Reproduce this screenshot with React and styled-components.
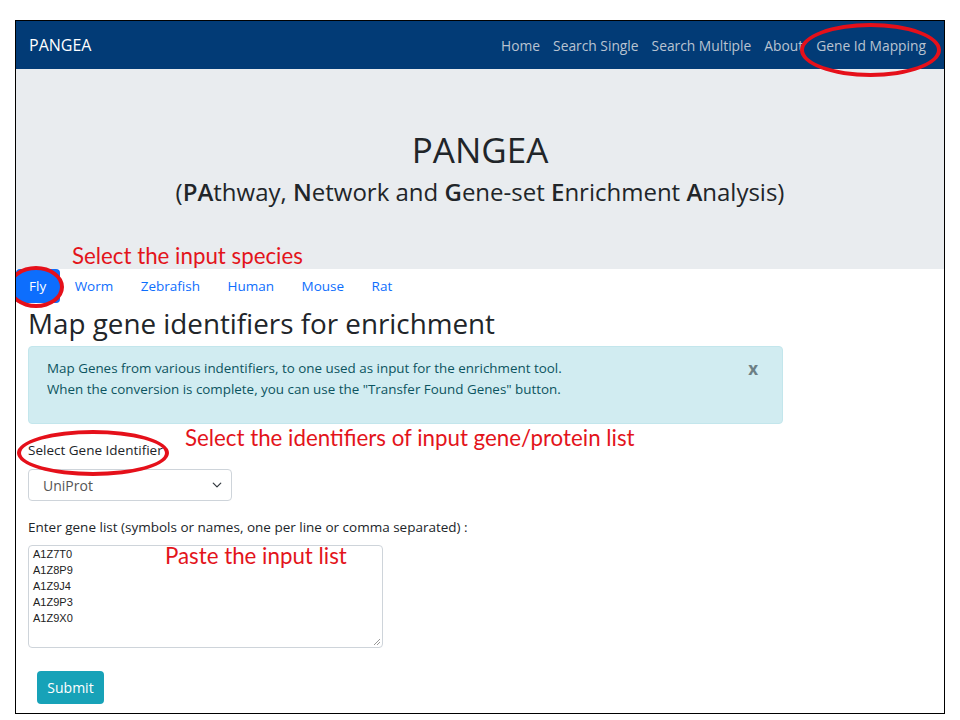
import React from "react";
import styled, { createGlobalStyle } from "styled-components";

const Global = createGlobalStyle`
  body {
    margin: 0;
    background: #fff;
    font-family: "Open Sans", "Noto Sans", sans-serif;
  }
`;

const Page = styled.div`
  width: 960px;
  height: 720px;
  padding: 20px 15px 0 15px;
  box-sizing: border-box;
`;

const Frame = styled.div`
  position: relative;
  width: 930px;
  height: 694px;
  border: 1px solid #000;
  box-sizing: border-box;
  display: flex;
  flex-direction: column;
  overflow: hidden;
`;

const Navbar = styled.nav`
  height: 48px;
  background: #023b76;
  display: flex;
  align-items: center;
  justify-content: space-between;
  padding: 0 18px 0 13px;
  flex-shrink: 0;
`;

const Brand = styled.span`
  color: #fff;
  font-size: 16px;
`;

const NavLinks = styled.div`
  display: flex;
  gap: 13px;
`;

const NavLink = styled.a`
  color: #b9c3d1;
  font-size: 13.8px;
  text-decoration: none;
`;

const Jumbo = styled.div`
  height: 200px;
  background: #e9ecef;
  display: flex;
  flex-direction: column;
  align-items: center;
  padding-top: 58px;
  box-sizing: border-box;
  flex-shrink: 0;
  color: #212529;
`;

const JumboTitle = styled.h1`
  margin: 0;
  font-size: 35px;
  font-weight: 400;
  line-height: 46px;
`;

const JumboSub = styled.div`
  margin-top: 3px;
  font-size: 24px;
  line-height: 32px;
  b { font-weight: 600; }
`;

const Content = styled.div`
  padding: 0 0 0 12px;
`;

const Tabs = styled.div`
  display: flex;
  margin-left: -12px;
  height: 34px;
  align-items: center;
`;

const Tab = styled.a`
  font-size: 13.5px;
  padding: ${(p) => (p.$first ? "8px 14px 8px 13px" : "8px 13px 8px 14.5px")};
  line-height: 18px;
  border-radius: 4px;
  color: ${(p) => (p.$active ? "#fff" : "#0d6efd")};
  background: ${(p) => (p.$active ? "#0d6efd" : "transparent")};
  text-decoration: none;
`;

const Heading = styled.h2`
  margin: 2px 0 0;
  font-size: 27.8px;
  font-weight: 500;
  line-height: 36px;
  color: #212529;
`;

const Alert = styled.div`
  margin-top: 5px;
  width: 755px;
  height: 78px;
  box-sizing: border-box;
  background: #d1ecf1;
  border: 1px solid #c3e6ec;
  border-radius: 4px;
  color: #0c5460;
  font-size: 13.4px;
  line-height: 21px;
  padding: 11px 18px;
  display: flex;
  justify-content: space-between;
  align-items: flex-start;
`;

const Close = styled.span`
  font-weight: 700;
  font-size: 17px;
  color: #6c7f85;
  margin: 0 6px 0 0;
  line-height: 22px;
`;

const Label = styled.div`
  font-size: 13.5px;
  color: #212529;
  margin-top: ${(p) => p.$mt || 0}px;
  line-height: 18px;
`;

const Select = styled.div`
  margin-top: 10px;
  width: 204px;
  height: 32px;
  border: 1px solid #ced4da;
  border-radius: 4px;
  box-sizing: border-box;
  display: flex;
  align-items: center;
  justify-content: space-between;
  padding: 0 9px 0 14px;
  font-size: 14px;
  color: #555;
`;

const TextArea = styled.div`
  margin-top: 9px;
  width: 355px;
  height: 103px;
  border: 1px solid #ced4da;
  border-radius: 4px;
  box-sizing: border-box;
  padding: 0 4px;
  font-family: "Liberation Sans", Arial, sans-serif;
  font-size: 11px;
  line-height: 16px;
  color: #222;
  position: relative;
`;

const Grip = styled.svg`
  position: absolute;
  right: 1px;
  bottom: 1px;
`;

const Button = styled.button`
  margin: 23px 0 0 9px;
  width: 67px;
  height: 33px;
  border: none;
  border-radius: 4px;
  background: #17a2b8;
  color: #fff;
  font-family: "Open Sans", sans-serif;
  font-size: 14px;
`;

const Note = styled.div`
  position: absolute;
  left: ${(p) => p.$x}px;
  top: ${(p) => p.$y}px;
  color: #e3141b;
  font-family: "Lato", "Open Sans", sans-serif;
  font-size: 22.3px;
  line-height: 24px;
  white-space: nowrap;
`;

const Ring = styled.div`
  position: absolute;
  left: ${(p) => p.$x}px;
  top: ${(p) => p.$y}px;
  width: ${(p) => p.$w}px;
  height: ${(p) => p.$h}px;
  border: 4px solid #e5101a;
  border-radius: 50%;
  box-sizing: border-box;
`;

const genes = ["A1Z7T0", "A1Z8P9", "A1Z9J4", "A1Z9P3", "A1Z9X0"];

export default function App() {
  return (
    <Page>
      <Global />
      <Frame>
        <Navbar>
          <Brand>PANGEA</Brand>
          <NavLinks>
            <NavLink>Home</NavLink>
            <NavLink>Search Single</NavLink>
            <NavLink>Search Multiple</NavLink>
            <NavLink>About</NavLink>
            <NavLink>Gene Id Mapping</NavLink>
          </NavLinks>
        </Navbar>
        <Jumbo>
          <JumboTitle>PANGEA</JumboTitle>
          <JumboSub>
            (<b>PA</b>thway, <b>N</b>etwork and <b>G</b>ene-set <b>E</b>nrichment <b>A</b>nalysis)
          </JumboSub>
        </Jumbo>
        <Content>
          <Tabs>
            <Tab $active $first>Fly</Tab>
            <Tab>Worm</Tab>
            <Tab>Zebrafish</Tab>
            <Tab>Human</Tab>
            <Tab>Mouse</Tab>
            <Tab>Rat</Tab>
          </Tabs>
          <Heading>Map gene identifiers for enrichment</Heading>
          <Alert>
            <div>
              Map Genes from various indentifiers, to one used as input for the enrichment tool.
              <br />
              When the conversion is complete, you can use the "Transfer Found Genes" button.
            </div>
            <Close>x</Close>
          </Alert>
          <Label $mt={17}>Select Gene Identifier</Label>
          <Select>
            <span>UniProt</span>
            <svg width="10" height="10" viewBox="0 0 16 16">
              <path d="M2 5l6 6 6-6" fill="none" stroke="#343a40" strokeWidth="2" strokeLinecap="round" strokeLinejoin="round" />
            </svg>
          </Select>
          <Label $mt={17}>Enter gene list (symbols or names, one per line or comma separated) :</Label>
          <TextArea>
            {genes.map((g) => (
              <div key={g}>{g}</div>
            ))}
            <Grip width="8" height="8" viewBox="0 0 8 8">
              <path d="M1 7L7 1M4 7L7 4" stroke="#999" strokeWidth="1" />
            </Grip>
          </TextArea>
          <Button>Submit</Button>
        </Content>

        <Ring $x={784} $y={2} $w={141} $h={54} />
        <Ring $x={-8} $y={245} $w={56} $h={42} />
        <Ring $x={1} $y={409} $w={152} $h={46} />
        <Note $x={56} $y={223}>Select the input species</Note>
        <Note $x={169} $y={405}>Select the identifiers of input gene/protein list</Note>
        <Note $x={149} $y={523}>Paste the input list</Note>
      </Frame>
    </Page>
  );
}
